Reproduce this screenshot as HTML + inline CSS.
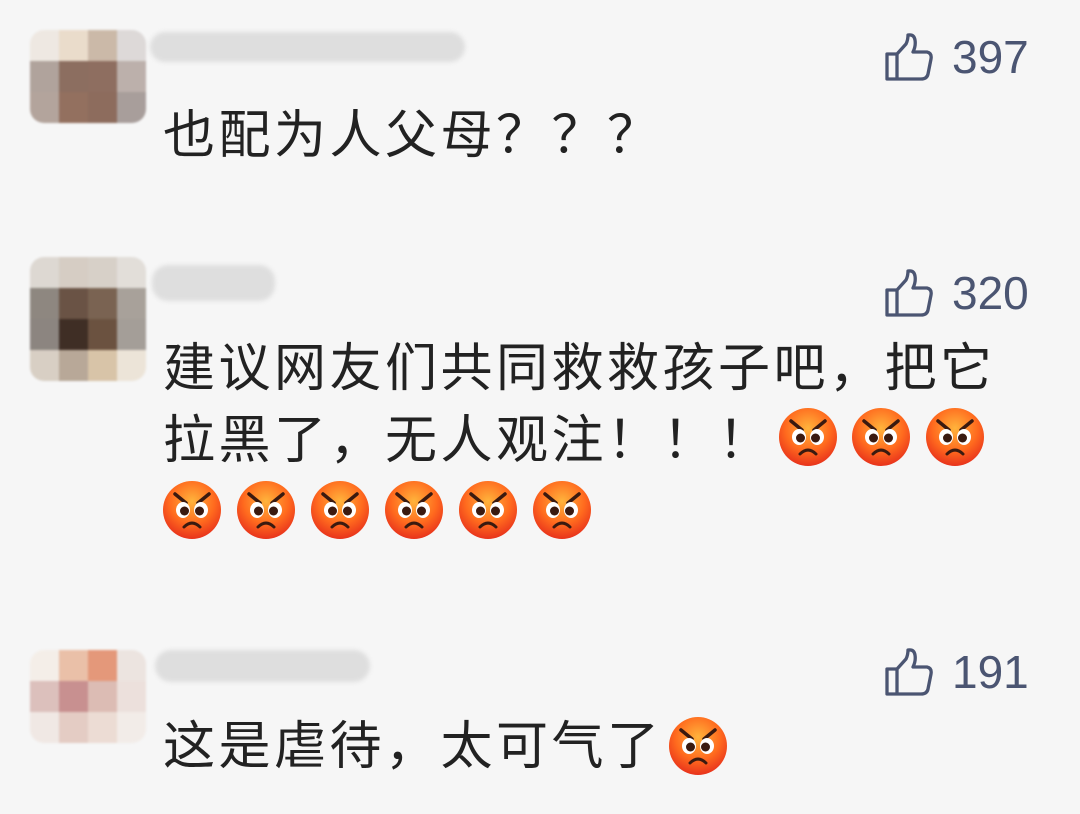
<!DOCTYPE html><html><head><meta charset="utf-8"><style>
body{margin:0;width:1080px;height:814px;background:#f6f6f6;position:relative;overflow:hidden;font-family:"Liberation Sans","Noto Sans CJK SC",sans-serif}
.a{position:absolute;display:grid;grid-template-columns:repeat(4,29px);grid-auto-rows:31px;border-radius:14px;overflow:hidden;filter:blur(1px)}
.n{position:absolute;background:#dedede;border-radius:16px;filter:blur(2px)}
.t{position:absolute;left:163px;font-size:52px;line-height:72px;color:#222;letter-spacing:3.5px;white-space:nowrap}
.l{position:absolute;left:884px;color:#4b5572;font-size:46px;display:flex;align-items:center}
.l svg{margin-right:18px}
.e{position:absolute;width:60px;height:60px}
</style></head><body>
<svg width="0" height="0" style="position:absolute"><defs>
<radialGradient id="g" cx="50%" cy="35%" r="65%"><stop offset="0" stop-color="#ffb43c"/><stop offset=".6" stop-color="#ff6a1e"/><stop offset="1" stop-color="#e8331c"/></radialGradient>
<symbol id="em" viewBox="0 0 60 60"><circle cx="30" cy="30" r="29" fill="url(#g)"/>
<path d="M13 14 L24 23 M47 14 L36 23" stroke="#3a1a10" stroke-width="3.5" stroke-linecap="round"/>
<ellipse cx="21" cy="30" rx="7" ry="8" fill="#fff"/><ellipse cx="39" cy="30" rx="7" ry="8" fill="#fff"/>
<circle cx="22.5" cy="31" r="4.5" fill="#3a1a10"/><circle cx="37.5" cy="31" r="4.5" fill="#3a1a10"/>
<path d="M22 47 Q30 39 38 47" stroke="#3a1a10" stroke-width="3" fill="none" stroke-linecap="round"/></symbol>
<symbol id="th" viewBox="0 0 50 50"><path d="M3 22 H13 V47 H3 Z M13 22 L22 12 Q24 8 24 3 Q30 2 31 8 Q32 14 29 20 H43 Q48 21 47 27 L44 42 Q43 47 37 47 H13" fill="none" stroke="#4b5572" stroke-width="3.3" stroke-linejoin="round"/></symbol>
</defs></svg>

<div class="a" style="left:30px;top:30px"><div style="background:#eee8e2"></div><div style="background:#eadccb"></div><div style="background:#cbb9a8"></div><div style="background:#ddd9d8"></div><div style="background:#b0a39c"></div><div style="background:#8c6e60"></div><div style="background:#8e6e60"></div><div style="background:#bcb0ab"></div><div style="background:#b3a49c"></div><div style="background:#93705f"></div><div style="background:#8d6c5d"></div><div style="background:#a89e9b"></div></div>
<div class="n" style="left:150px;top:32px;width:315px;height:30px"></div>
<div class="l" style="top:30px"><svg width="50" height="50"><use href="#th"/></svg>397</div>
<div class="t" style="top:100px">也配为人父母？？？</div>

<div class="a" style="left:30px;top:257px"><div style="background:#ddd8d2"></div><div style="background:#d6cdc4"></div><div style="background:#d7d0c8"></div><div style="background:#e2ded9"></div><div style="background:#8e8780"></div><div style="background:#6a5345"></div><div style="background:#7a6352"></div><div style="background:#a8a19a"></div><div style="background:#8c8580"></div><div style="background:#3f2e25"></div><div style="background:#6b5240"></div><div style="background:#a49e98"></div><div style="background:#d8cfc4"></div><div style="background:#b8a898"></div><div style="background:#d8c4a8"></div><div style="background:#ece4d8"></div></div>
<div class="n" style="left:152px;top:265px;width:123px;height:36px"></div>
<div class="l" style="top:266px"><svg width="50" height="50"><use href="#th"/></svg>320</div>
<div class="t" style="top:333px">建议网友们共同救救孩子吧，把它<br>拉黑了，无人观注！！！</div>
<svg class="e" style="left:778px;top:407px"><use href="#em"/></svg>
<svg class="e" style="left:851px;top:407px"><use href="#em"/></svg>
<svg class="e" style="left:925px;top:407px"><use href="#em"/></svg>
<svg class="e" style="left:162px;top:480px"><use href="#em"/></svg>
<svg class="e" style="left:236px;top:480px"><use href="#em"/></svg>
<svg class="e" style="left:310px;top:480px"><use href="#em"/></svg>
<svg class="e" style="left:384px;top:480px"><use href="#em"/></svg>
<svg class="e" style="left:458px;top:480px"><use href="#em"/></svg>
<svg class="e" style="left:532px;top:480px"><use href="#em"/></svg>

<div class="a" style="left:30px;top:650px"><div style="background:#f4eee8"></div><div style="background:#eac0a8"></div><div style="background:#e4987a"></div><div style="background:#ece4e0"></div><div style="background:#dcc0bc"></div><div style="background:#c89090"></div><div style="background:#dcbcb4"></div><div style="background:#ece0dc"></div><div style="background:#f0e8e4"></div><div style="background:#e4ccc4"></div><div style="background:#ecdcd4"></div><div style="background:#f2ece8"></div></div>
<div class="n" style="left:155px;top:650px;width:215px;height:32px"></div>
<div class="l" style="top:645px"><svg width="50" height="50"><use href="#th"/></svg>191</div>
<div class="t" style="top:711px">这是虐待，太可气了</div>
<svg class="e" style="left:668px;top:716px"><use href="#em"/></svg>
</body></html>
